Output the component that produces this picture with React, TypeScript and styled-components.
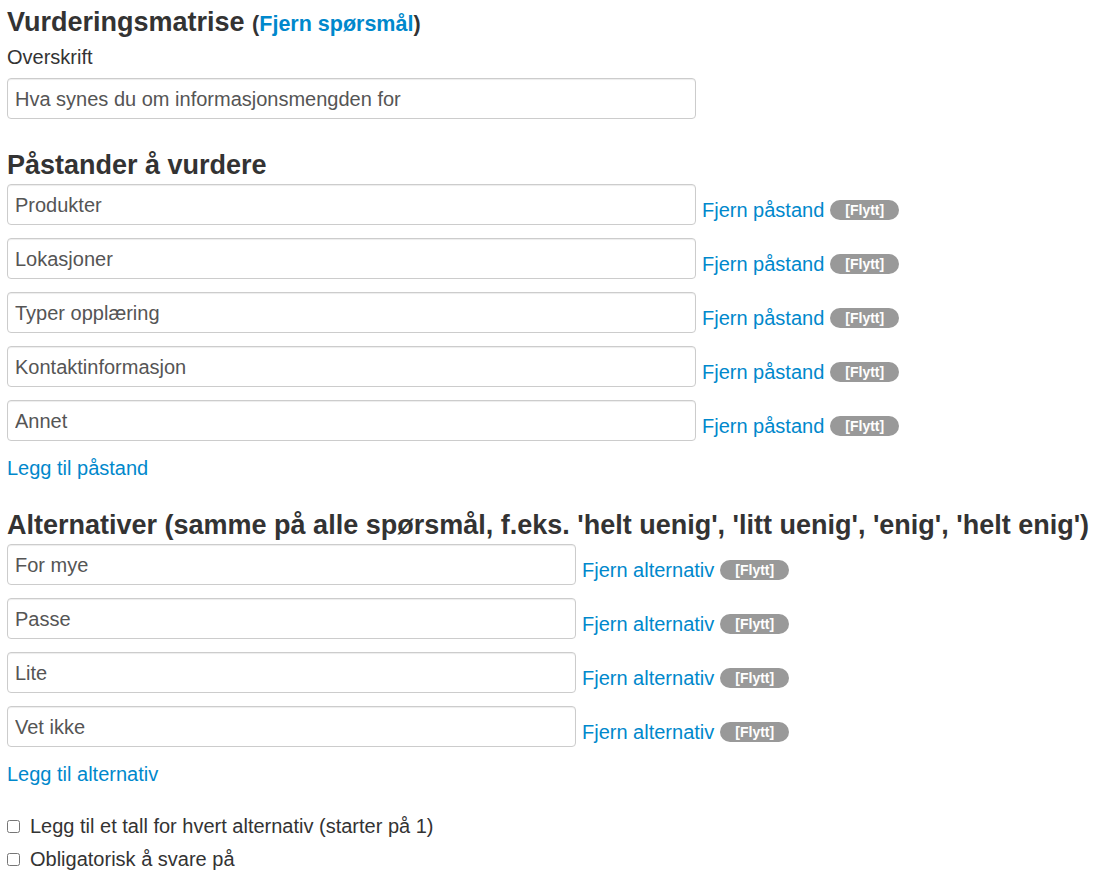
import styled, { createGlobalStyle } from "styled-components";

const GlobalStyle = createGlobalStyle`
  body {
    margin: 0;
    background: #fff;
    font-family: "Liberation Sans", Arial, Helvetica, sans-serif;
    color: #333;
  }
`;

const Page = styled.div`
  padding: 0 7px;
  font-size: 20px;
  line-height: 30px;
`;

const Heading = styled.h2<{ $top: number }>`
  margin: ${(p) => p.$top}px 0 0;
  height: 30px;
  font-size: 27px;
  font-weight: bold;
  line-height: 30px;
  color: #333;
  white-space: nowrap;
`;

const HeadingNote = styled.span`
  font-size: 21.5px;
  line-height: 1;
`;

const Link = styled.a`
  color: #0088cc;
  text-decoration: none;
  cursor: pointer;
`;

const Label = styled.div`
  margin-top: 5px;
`;

const TextInput = styled.input<{ $width: number }>`
  box-sizing: border-box;
  display: block;
  width: ${(p) => p.$width}px;
  height: 41px;
  padding: 2px 7px 0;
  border: 1px solid #ccc;
  border-radius: 4px;
  font-family: inherit;
  font-size: 20px;
  color: #555;
  box-shadow: inset 0 1px 1px rgba(0, 0, 0, 0.075);
  outline: none;
`;

const List = styled.div`
  display: flex;
  flex-direction: column;
  gap: 13px;
  margin-top: 4px;
`;

const Row = styled.div`
  display: flex;
  align-items: center;
`;

const RowActions = styled.div`
  display: flex;
  align-items: center;
  gap: 6px;
  margin: 10px 0 0 6px;
`;

const Badge = styled.span`
  display: inline-block;
  padding: 0 15px;
  height: 20px;
  line-height: 20px;
  border-radius: 10px;
  background: #999;
  color: #fff;
  font-size: 14px;
  font-weight: bold;
`;

const AddLink = styled(Link)`
  display: block;
  margin-top: 12px;
`;

const Checks = styled.div`
  display: flex;
  flex-direction: column;
  gap: 3px;
  margin-top: 22px;
`;

const CheckRow = styled.label`
  display: flex;
  align-items: center;
  gap: 10px;
  height: 30px;
  input {
    margin: 0;
    width: 13px;
    height: 13px;
  }
`;

const claims = ["Produkter", "Lokasjoner", "Typer opplæring", "Kontaktinformasjon", "Annet"];
const options = ["For mye", "Passe", "Lite", "Vet ikke"];

const App = () => {
  return (
    <Page>
      <GlobalStyle />
      <Heading $top={7}>
        Vurderingsmatrise{" "}
        <HeadingNote>
          (<Link>Fjern spørsmål</Link>)
        </HeadingNote>
      </Heading>
      <Label>Overskrift</Label>
      <TextInput $width={689} defaultValue="Hva synes du om informasjonsmengden for" style={{ marginTop: 6 }} />

      <Heading $top={31}>Påstander å vurdere</Heading>
      <List>
        {claims.map((c) => (
          <Row key={c}>
            <TextInput $width={689} defaultValue={c} />
            <RowActions>
              <Link>Fjern påstand</Link>
              <Badge>[Flytt]</Badge>
            </RowActions>
          </Row>
        ))}
      </List>
      <AddLink>Legg til påstand</AddLink>

      <Heading $top={27}>
        Alternativer (samme på alle spørsmål, f.eks. 'helt uenig', 'litt uenig', 'enig', 'helt enig')
      </Heading>
      <List>
        {options.map((o) => (
          <Row key={o}>
            <TextInput $width={569} defaultValue={o} />
            <RowActions>
              <Link>Fjern alternativ</Link>
              <Badge>[Flytt]</Badge>
            </RowActions>
          </Row>
        ))}
      </List>
      <AddLink>Legg til alternativ</AddLink>

      <Checks>
        <CheckRow>
          <input type="checkbox" />
          Legg til et tall for hvert alternativ (starter på 1)
        </CheckRow>
        <CheckRow>
          <input type="checkbox" />
          Obligatorisk å svare på
        </CheckRow>
      </Checks>
    </Page>
  );
};

export default App;
